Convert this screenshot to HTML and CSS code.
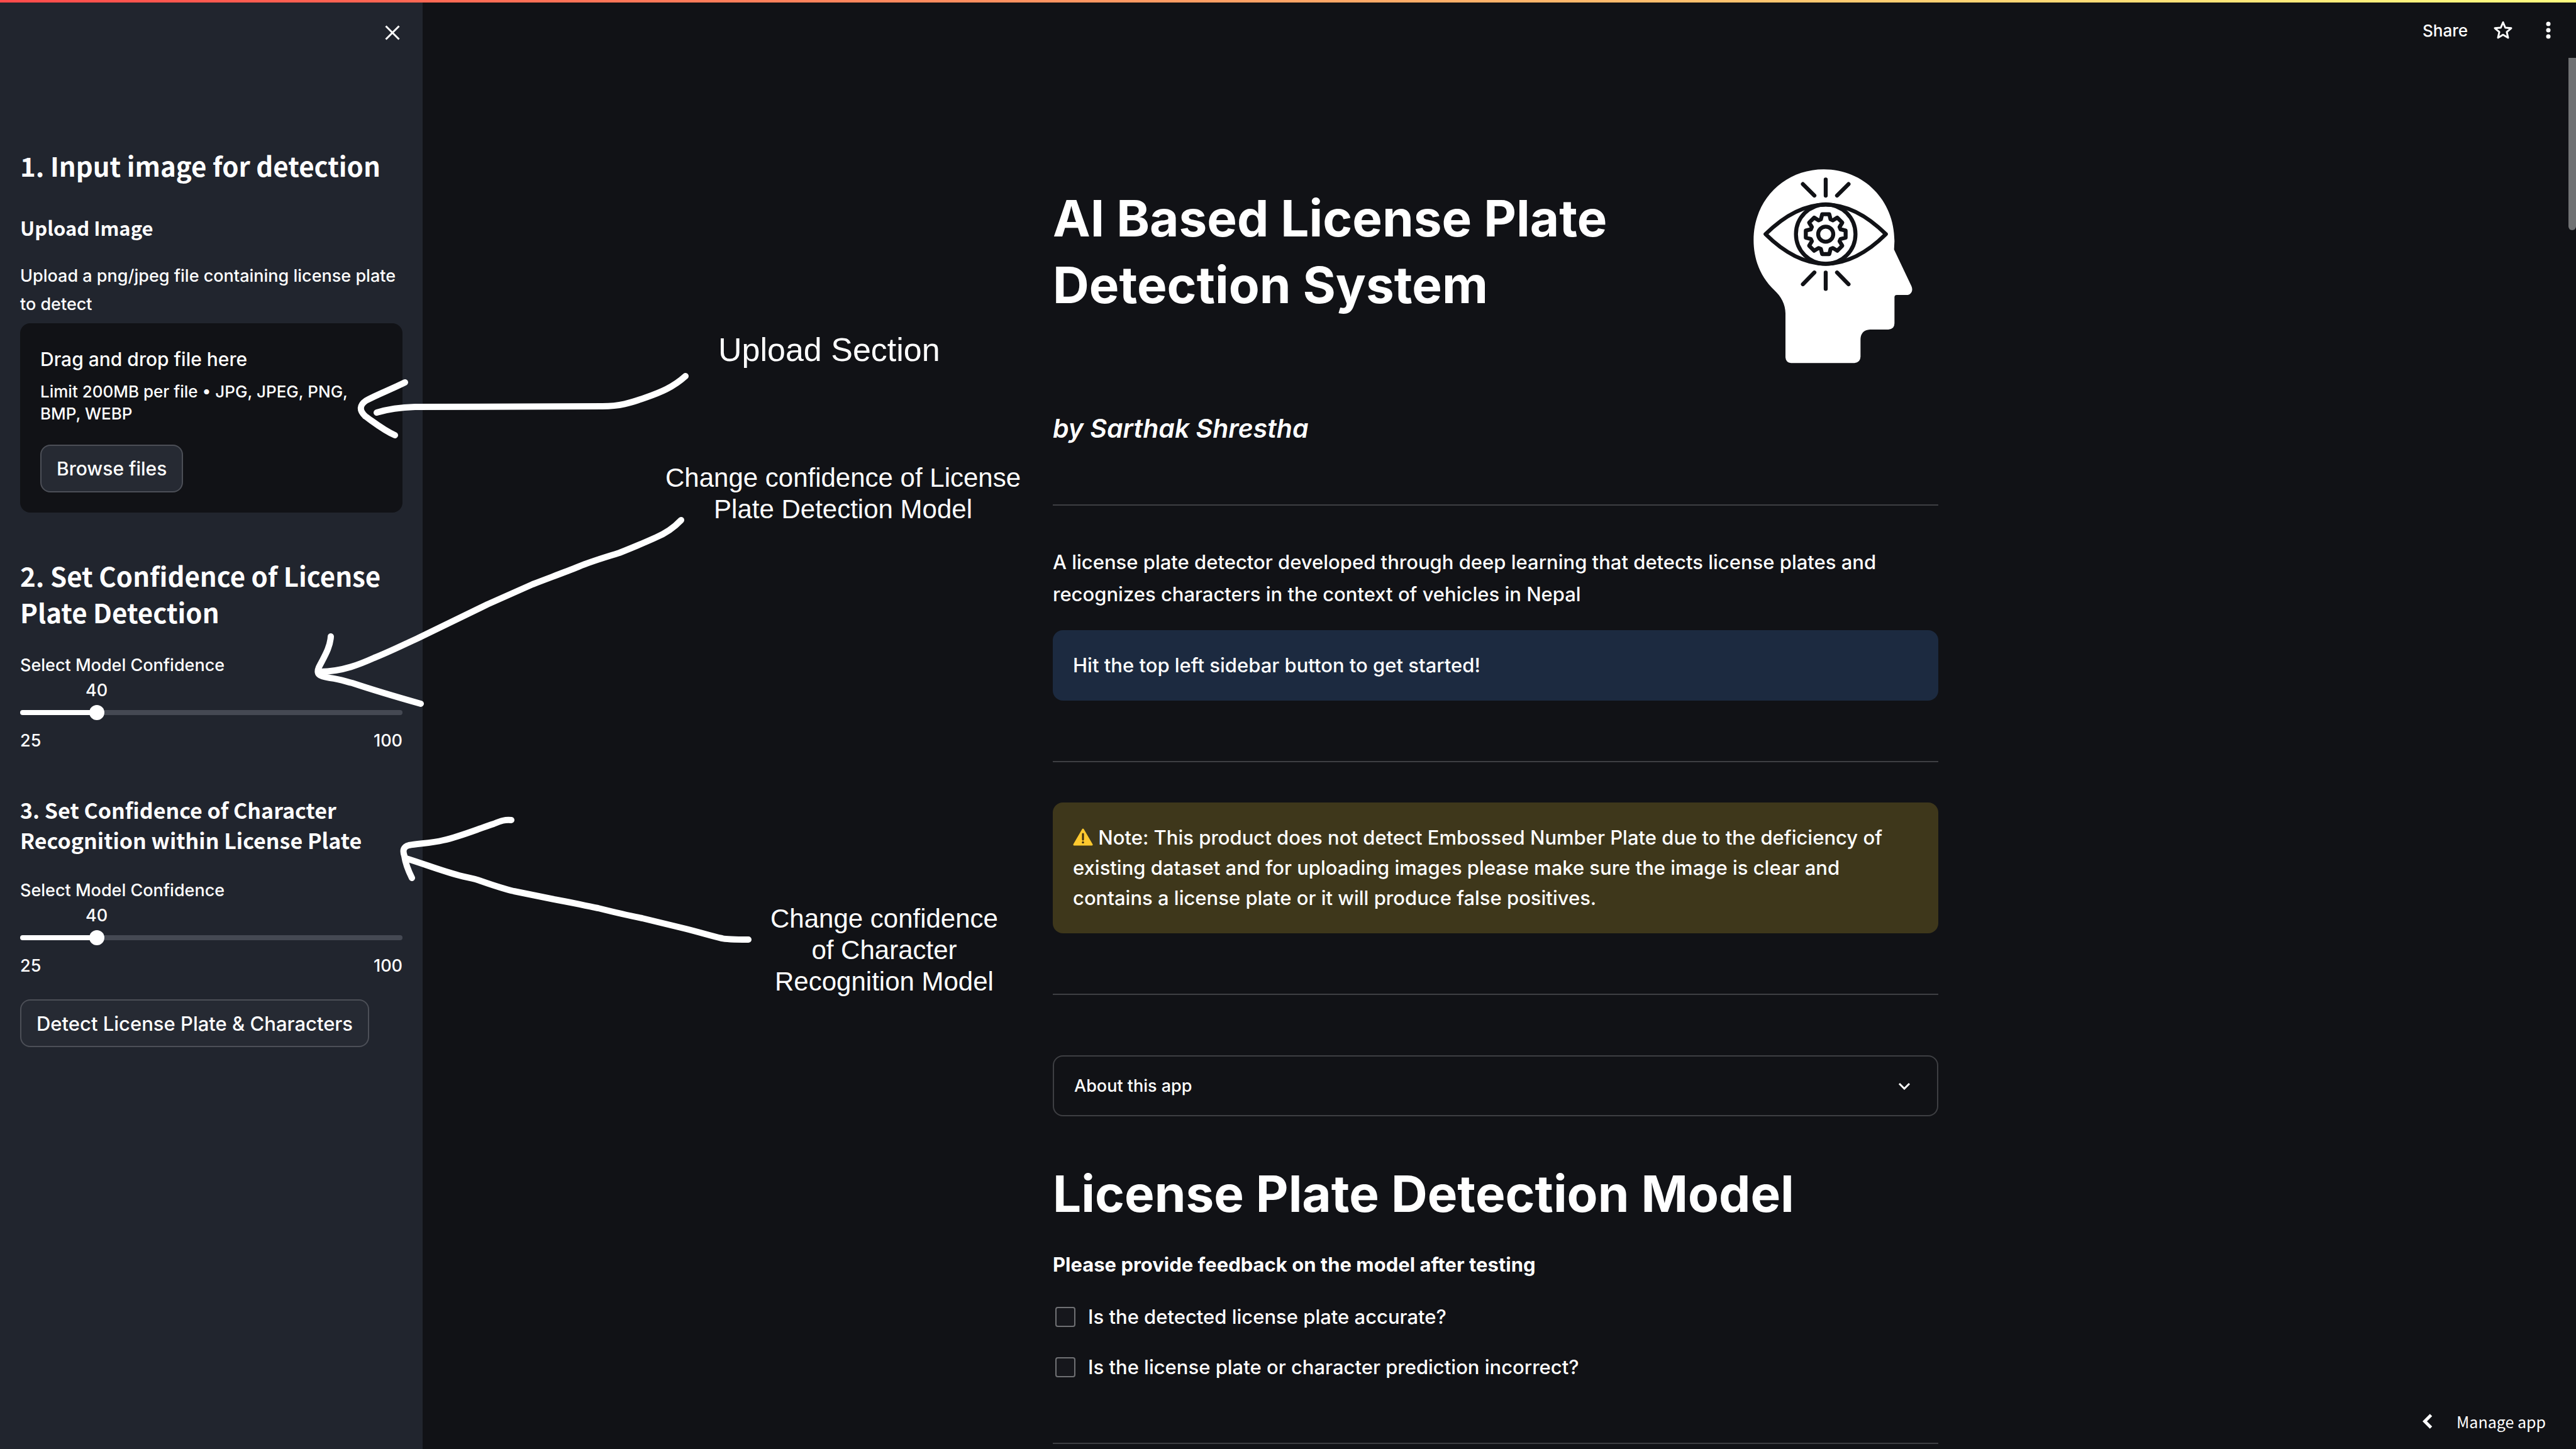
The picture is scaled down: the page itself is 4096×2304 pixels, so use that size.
FILE: index.html
```html
<!DOCTYPE html>
<html lang="en">
<head>
<meta charset="utf-8">
<title>AI Based License Plate Detection System</title>
<link rel="stylesheet" href="styles.css">
</head>
<body>
<div class="decoration"></div>
<div class="app">
  <aside class="sidebar">
    <header class="sidebar-header">
      <button class="icon-button" type="button" aria-label="Close sidebar">
        <svg class="icon-close" viewBox="0 0 24 24" aria-hidden="true"><path d="M1.500 1.500 22.500 22.500M22.500 1.500 1.500 22.500"/></svg>
      </button>
    </header>
    <section class="upload">
      <h2 class="side-title">1. Input image for detection</h2>
      <h4 class="side-label-title">Upload Image</h4>
      <p class="caption">Upload a png/jpeg file containing license plate to detect</p>
      <div class="dropzone">
        <p class="drop-title">Drag and drop file here</p>
        <p class="drop-limit">Limit 200MB per file • JPG, JPEG, PNG, BMP, WEBP</p>
        <button class="button" type="button">Browse files</button>
      </div>
    </section>
    <section class="confidence">
      <h2 class="side-title">2. Set Confidence of License Plate Detection</h2>
      <div class="slider">
        <label class="slider-label" for="plate-confidence">Select Model Confidence</label>
        <output class="slider-value" for="plate-confidence">40</output>
        <div class="slider-rail"><input class="slider-input" id="plate-confidence" type="range" min="25" max="100" value="40"></div>
        <div class="slider-ticks"><span>25</span><span>100</span></div>
      </div>
    </section>
    <section class="recognition">
      <h3 class="side-subtitle">3. Set Confidence of Character Recognition within License Plate</h3>
      <div class="slider">
        <label class="slider-label" for="character-confidence">Select Model Confidence</label>
        <output class="slider-value" for="character-confidence">40</output>
        <div class="slider-rail"><input class="slider-input" id="character-confidence" type="range" min="25" max="100" value="40"></div>
        <div class="slider-ticks"><span>25</span><span>100</span></div>
      </div>
    </section>
    <button class="button detect" type="button">Detect License Plate &amp; Characters</button>
  </aside>

  <main class="main">
    <header class="toolbar">
      <button class="share" type="button">Share</button>
      <button class="icon-button" type="button" aria-label="Favorite">
        <svg class="icon-star" viewBox="0 0 32 32" aria-hidden="true"><path d="M16 3.500 19.600 12 29 12.800 21.900 18.800 24 28 16 23.200 8 28 10.100 18.800 3 12.800 12.400 12Z"/></svg>
      </button>
      <button class="icon-button" type="button" aria-label="Menu">
        <svg class="icon-dots" viewBox="0 0 32 28" aria-hidden="true"><circle cx="16" cy="4" r="3.500"/><circle cx="16" cy="14" r="3.500"/><circle cx="16" cy="24" r="3.500"/></svg>
      </button>
    </header>
    <div class="viewport">
      <div class="scroll-area">
        <div class="content">
          <div class="hero">
            <h1 class="title hero-title">AI Based License Plate Detection System</h1>
            <svg class="hero-logo" viewBox="0 0 960 1080" role="img" aria-label="Head with an eye">
              <path class="head" d="M237 775C237 730 215 693 185 665C120 605 85 520 85 425C85 235 230 88 420 88C610 88 757 235 757 430L755 470L838 645C848 668 835 687 815 687L768 687Q758 687 757 697L757 822Q757 850 728 852L640 852Q597 855 595 897L595 982Q594 1010 566 1012L264 1012Q239 1010 237 985Z"/>
              <g class="head-lines">
                <path d="M429 136V213M320 158 375 213M538 158 483 213M429 580V658M375 580 320 636M483 580 538 636"/>
                <path d="M142 397C230 310 330 256 429 256C528 256 628 310 716 397C628 485 528 538 429 538C330 538 230 485 142 397Z"/>
                <circle cx="429" cy="397" r="142"/>
                <circle cx="429" cy="397" r="36"/>
                <path transform="translate(429 397)" d="M-23-71-17-95 17-95 23-71 34-66 55-79 79-55 66-34 71-23 95-17 95 17 71 23 66 34 79 55 55 79 34 66 23 71 17 95-17 95-23 71-34 66-55 79-79 55-66 34-71 23-95 17-95-17-71-23-66-34-79-55-55-79-34-66Z"/>
              </g>
            </svg>
          </div>
          <p class="author">by Sarthak Shrestha</p>
          <hr class="divider">
          <p class="intro">A license plate detector developed through deep learning that detects license plates and recognizes characters in the context of vehicles in Nepal</p>
          <div class="alert alert-info">Hit the top left sidebar button to get started!</div>
          <hr class="divider">
          <div class="alert alert-warning"><svg class="icon-warning" viewBox="0 0 32 28" aria-hidden="true"><path class="warn-body" d="M16 2 30 26H2Z"/><path class="warn-mark" d="M16 9V18"/><circle class="warn-dot" cx="16" cy="22.500" r="1.700"/></svg> Note: This product does not detect Embossed Number Plate due to the deficiency of<br>existing dataset and for uploading images please make sure the image is clear and<br>contains a license plate or it will produce false positives.</div>
          <hr class="divider">
          <details class="expander">
            <summary class="expander-head">About this app
              <svg class="icon-chevron" viewBox="0 0 20 12" aria-hidden="true"><path d="M2 2 10 10 18 2"/></svg>
            </summary>
          </details>
          <h1 class="title">License Plate Detection Model</h1>
          <p class="feedback"><strong>Please provide feedback on the model after testing</strong></p>
          <div class="checks">
            <label class="check"><input class="check-box" type="checkbox">Is the detected license plate accurate?</label>
            <label class="check"><input class="check-box" type="checkbox">Is the license plate or character prediction incorrect?</label>
          </div>
          <hr class="divider">
        </div>
      </div>
      <div class="scrollbar"></div>
    </div>
  </main>
</div>

<button class="manage" type="button">
  <svg class="icon-back" viewBox="0 0 16 24" aria-hidden="true"><path d="M13.500 2 3.500 12 13.500 22"/></svg>
  Manage app
</button>

<div class="notes">
  <svg class="arrows" aria-hidden="true">
    <path d="M1090 598C1070 616 1050 624 1027 632C1002 641 985 646 958 646L660 647Q625 648 599 656"/>
    <path d="M644 608C620 620 600 627 582 637Q566 648 581 662C598 674 610 684 628 692"/>
    <path d="M1083 827Q1066 845 1042 855C1020 865 1005 871 985 879C960 887 942 892 920 901C895 911 870 920 847 929C822 940 800 950 775 961L664 1015C640 1026 618 1037 595 1046C575 1055 545 1068 509 1068"/>
    <path d="M526 1012C525 1030 515 1045 507 1061C502 1073 508 1075 525 1078C540 1080 548 1083 560 1086C590 1096 630 1108 669 1119"/>
    <path d="M813 1304C803 1303 797 1305 785 1310C760 1318 735 1329 705 1336C685 1341 665 1341 650 1344Q638 1347 643 1361C645 1375 650 1386 655 1396"/>
    <path d="M646 1365C675 1374 700 1384 730 1392C745 1396 752 1396 765 1401C785 1408 800 1413 817 1417L881 1430C905 1434 925 1439 951 1444C975 1450 995 1455 1021 1460L1091 1477C1115 1483 1130 1488 1148 1492Q1155 1494 1190 1494"/>
  </svg>
  <p class="note note-upload">Upload Section</p>
  <p class="note note-plate">Change confidence of License<br>Plate Detection Model</p>
  <p class="note note-character">Change confidence<br>of Character<br>Recognition Model</p>
</div>
</body>
</html>
```
FILE: styles.css
```css
* {
  box-sizing: border-box;
}

body {
  margin: 0;
  height: 100vh;
  overflow: hidden;
  position: relative;
  background: #111216;
  color: #fff;
  font-family: Inter, "Open Sans", sans-serif;
  font-size: 31px;
  font-weight: 500;
  line-height: 51px;
}

h1, h2, h3, h4, p {
  margin: 0;
}

button {
  font: inherit;
  color: inherit;
  cursor: pointer;
}

svg {
  display: block;
  fill: none;
  stroke: #fff;
}

.decoration {
  position: absolute;
  top: 0;
  left: 0;
  right: 0;
  height: 4px;
  z-index: 2;
  background: linear-gradient(90deg, #ff4b4b, #fffd80);
}

.app {
  display: flex;
  height: 100%;
}

/* Sidebar */

.sidebar {
  flex: 0 0 672px;
  padding: 0 32px;
  background: #21252e;
}

.sidebar-header {
  display: flex;
  justify-content: flex-end;
  padding: 40px 4px 0 0;
  height: 234px;
}

.icon-button {
  display: block;
  align-self: flex-start;
  padding: 0;
  border: 0;
  background: none;
}

.icon-close {
  width: 24px;
  height: 24px;
  stroke-width: 3;
}

.side-title,
.side-label-title,
.side-subtitle {
  font-family: "Noto Sans CJK JP", "Noto Sans", sans-serif;
  font-weight: 700;
}

.side-title {
  font-size: 42px;
  line-height: 58px;
}

.side-label-title {
  margin-top: 48px;
  font-size: 31px;
  line-height: 44px;
}

.side-subtitle {
  font-size: 34px;
  line-height: 48px;
}

.caption {
  margin-top: 32px;
  font-size: 27px;
  line-height: 45px;
}

.dropzone {
  margin-top: 8px;
  padding: 32px;
  border-radius: 16px;
  background: #111216;
}

.drop-title {
  font-size: 30px;
}

.drop-limit {
  margin-top: 8px;
  font-size: 26px;
  line-height: 35px;
}

.button {
  display: block;
  height: 76px;
  padding: 0 24px;
  border: 2px solid #4c4f57;
  border-radius: 16px;
  background: #262a33;
}

.dropzone .button {
  margin-top: 32px;
  font-size: 30px;
}

.confidence {
  margin-top: 71px;
}

.recognition {
  margin-top: 68px;
}

.detect {
  margin-top: 35px;
}

.slider {
  margin-top: 34px;
  font-size: 27px;
  line-height: 36px;
}

.slider-label {
  display: block;
  line-height: 44px;
}

.slider-value {
  display: block;
  width: 40%;
  text-align: center;
}

.slider-rail {
  display: flex;
  align-items: center;
  height: 8px;
  margin: 13px 0 23px;
  border-radius: 4px;
  background: linear-gradient(90deg, #fff 20%, #454953 20%);
}

.slider-input {
  flex: 1;
  height: 24px;
  margin: 0 -12px;
  background: none;
  appearance: none;
}

.slider-input::-webkit-slider-thumb {
  width: 24px;
  height: 24px;
  border: 0;
  border-radius: 50%;
  background: #fff;
  appearance: none;
}

.slider-ticks {
  display: flex;
  justify-content: space-between;
}

/* Main column */

.main {
  flex: 1;
  min-width: 0;
  display: flex;
  flex-direction: column;
}

.toolbar {
  display: flex;
  justify-content: flex-end;
  align-items: center;
  gap: 40px;
  height: 92px;
  padding: 4px 28px 0 0;
}

.toolbar .icon-button {
  align-self: center;
}

.share {
  padding: 0;
  border: 0;
  background: none;
  font-size: 26px;
}

.icon-star {
  width: 32px;
  height: 32px;
  stroke-width: 3;
  stroke-linejoin: round;
}

.icon-dots {
  width: 32px;
  height: 28px;
  fill: #fff;
  stroke: none;
}

.viewport {
  flex: 1;
  min-height: 0;
  display: flex;
}

.scroll-area {
  flex: 1;
  overflow: hidden;
}

.content {
  max-width: 1408px;
  margin: 0 auto;
  padding: 148px 0;
}

.scrollbar {
  width: 12px;
  height: 274px;
  border-radius: 0 0 6px 6px;
  background: #707173;
}

.hero {
  display: flex;
  justify-content: space-between;
  padding-right: 2px;
}

.title {
  font-size: 80px;
  font-weight: 700;
  line-height: 106px;
}

.hero-title {
  flex: 0 1 960px;
  padding-top: 54px;
}

.hero-logo {
  width: 320px;
  height: 360px;
  stroke: none;
}

.head {
  fill: #fff;
}

.head-lines {
  fill: none;
  stroke: #111216;
  stroke-width: 19;
  stroke-linecap: round;
  stroke-linejoin: round;
}

.author {
  margin-top: 56px;
  font-size: 41px;
  font-style: italic;
  font-weight: 600;
  line-height: 50px;
}

.divider {
  height: 2px;
  margin: 96px 0;
  border: 0;
  background: #3e3f43;
}

.author + .divider {
  margin-bottom: 64px;
}

.alert {
  padding: 32px;
  border-radius: 16px;
  line-height: 48px;
}

.alert-info {
  margin-top: 32px;
  background: #1c2a40;
}

.alert-info + .divider {
  margin-bottom: 64px;
}

.alert-warning {
  background: #3e371b;
}

.icon-warning {
  display: inline-block;
  width: 32px;
  height: 28px;
  vertical-align: -2px;
}

.warn-body {
  fill: #fdc92f;
  stroke: #fdc92f;
  stroke-width: 3;
  stroke-linejoin: round;
}

.warn-mark {
  stroke: #3b2d10;
  stroke-width: 3;
  stroke-linecap: round;
}

.warn-dot {
  fill: #3b2d10;
  stroke: none;
}

.expander {
  border: 2px solid #3e3f43;
  border-radius: 16px;
}

.expander-head {
  display: flex;
  justify-content: space-between;
  align-items: center;
  height: 93px;
  padding: 0 42px 0 32px;
  font-size: 27px;
  list-style: none;
}

.icon-chevron {
  width: 20px;
  height: 12px;
  stroke-width: 3;
}

.expander + .title {
  margin-top: 70px;
}

.feedback {
  margin-top: 34px;
}

.checks {
  display: flex;
  flex-direction: column;
  gap: 32px;
  margin-top: 34px;
}

.check {
  display: flex;
  align-items: center;
  gap: 20px;
  padding-left: 4px;
  line-height: 48px;
}

.check-box {
  width: 32px;
  height: 32px;
  margin: 0;
  border: 2px solid #707174;
  border-radius: 4px;
  background: #16171c;
  appearance: none;
}

.manage {
  position: absolute;
  right: 48px;
  bottom: 26px;
  z-index: 1;
  display: flex;
  align-items: center;
  gap: 38px;
  padding: 0;
  border: 0;
  background: none;
  font-family: "Noto Sans CJK JP", "Noto Sans", sans-serif;
  font-size: 25px;
  font-weight: 400;
  line-height: 36px;
}

.icon-back {
  width: 16px;
  height: 24px;
  stroke-width: 5;
}

/* Hand-drawn notes over the page */

.notes {
  position: absolute;
  inset: 0;
  z-index: 3;
  pointer-events: none;
}

.arrows {
  width: 100%;
  height: 100%;
  stroke-width: 10;
  stroke-linecap: round;
  stroke-linejoin: round;
}

.note {
  position: absolute;
  font-family: "Liberation Sans", Arial, sans-serif;
  font-size: 42px;
  font-weight: 400;
  line-height: 50px;
  text-align: center;
  white-space: nowrap;
}

.note-upload {
  left: 1142px;
  top: 526px;
  font-size: 52px;
  line-height: 60px;
}

.note-plate {
  left: 1058px;
  top: 735px;
}

.note-character {
  left: 1225px;
  top: 1436px;
}
```
